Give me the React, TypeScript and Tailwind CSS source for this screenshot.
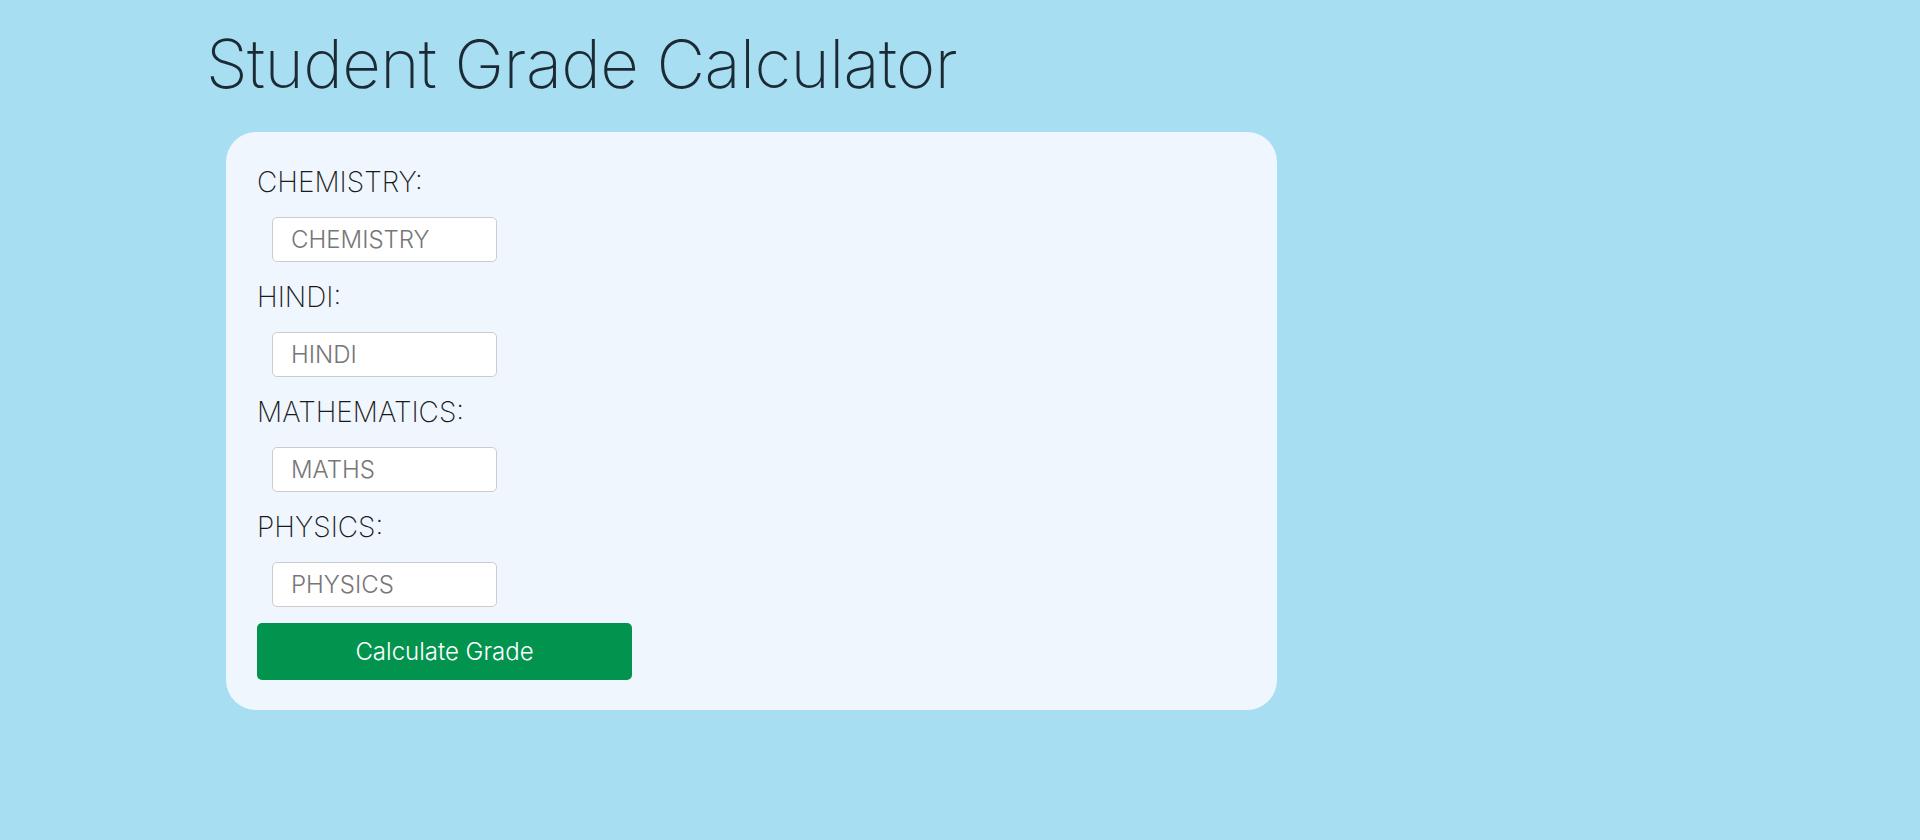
import React from "react";

const subjects = [
  { label: "CHEMISTRY:", placeholder: "CHEMISTRY" },
  { label: "HINDI:", placeholder: "HINDI" },
  { label: "MATHEMATICS:", placeholder: "MATHS" },
  { label: "PHYSICS:", placeholder: "PHYSICS" },
];

export default function App() {
  return (
    <div
      className="min-h-[840px] w-full bg-[#a7def1] pl-[206px] pt-[24px]"
      style={{ fontFamily: "Inter, 'Open Sans', sans-serif" }}
    >
      <h1 className="text-[67px] leading-[80px] font-extralight text-[#1c2a35] tracking-[-0.6px]">
        Student Grade Calculator
      </h1>
      <form
        onSubmit={(e) => e.preventDefault()}
        className="ml-[20px] mt-[28px] w-[1051px] h-[578px] rounded-[30px] bg-[#eff6fe] pl-[31px] pt-[33px] flex flex-col"
      >
        {subjects.map((s, i) => (
          <div key={s.label} className={i === 0 ? "flex flex-col" : "flex flex-col mt-[18px]"}>
            <label className="text-[28px] leading-[34px] font-extralight text-[#1a1a1a]">
              {s.label}
            </label>
            <input
              type="number"
              placeholder={s.placeholder}
              className="ml-[15px] mt-[18px] w-[225px] h-[45px] rounded-[5px] border border-[#ccc] bg-white px-[18px] text-[24px] font-light text-[#333] placeholder:text-[#777] outline-none"
            />
          </div>
        ))}
        <button
          type="submit"
          className="mt-[16px] w-[375px] h-[57px] rounded-[5px] bg-[#02944f] text-white text-[24px] font-light"
        >
          Calculate Grade
        </button>
      </form>
    </div>
  );
}
